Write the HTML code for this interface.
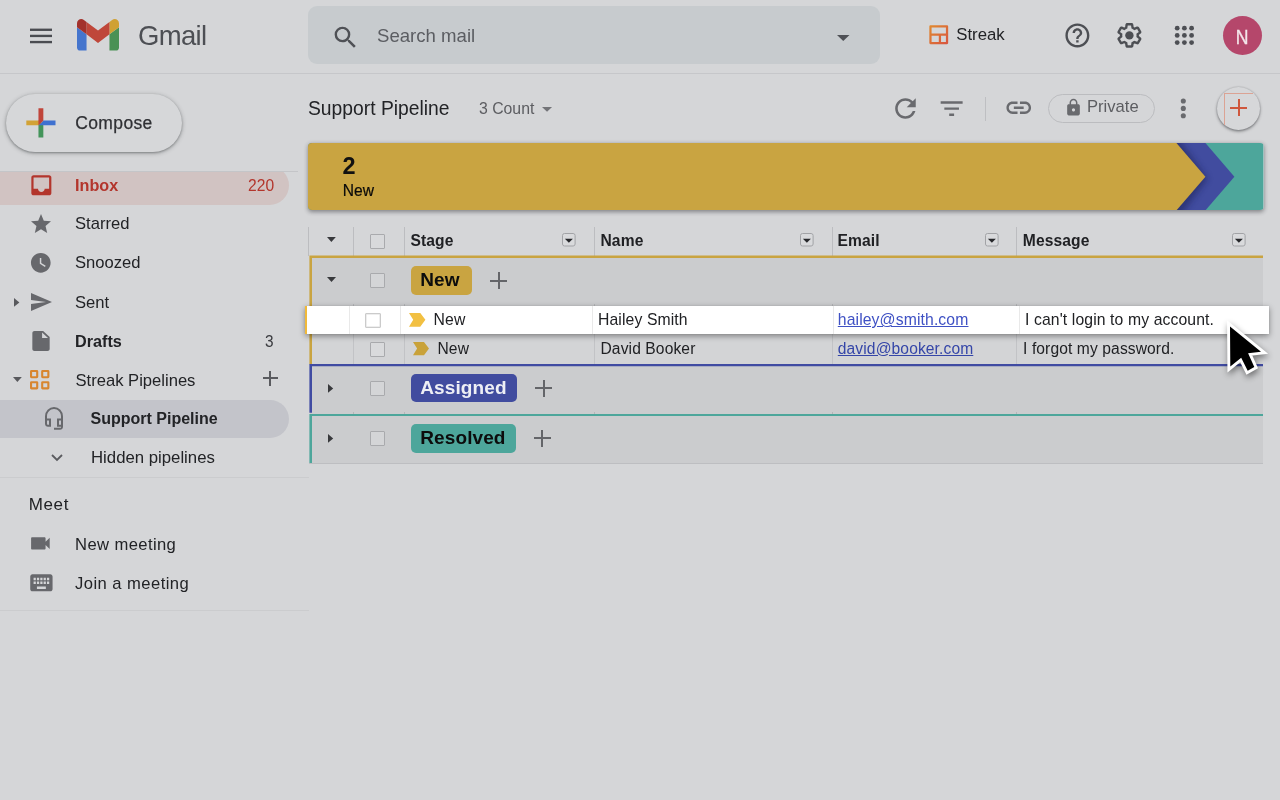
<!DOCTYPE html>
<html>
<head>
<meta charset="utf-8">
<title>Support Pipeline - Gmail</title>
<style>
*{box-sizing:border-box;margin:0;padding:0}
html,body{width:1280px;height:800px;overflow:hidden}
body{background:#d5d6d8;font-family:"Liberation Sans",sans-serif;color:#1f2023;position:relative}
.abs{position:absolute}
svg{position:absolute;display:block;overflow:visible}
.t{position:absolute;white-space:nowrap;line-height:1}
.nav{font-size:16.6px;color:#222326}
.b{font-weight:bold}
.hl{position:absolute;background:#bfc0c3;height:1px}
.cb{position:absolute;width:15px;height:15px;border:1px solid #a9aaad;background:#d8d9db;border-radius:1px}
.vl{position:absolute;width:1px;background:#bcbdc0}
.cell{font-size:15.6px;color:#202124;letter-spacing:.11px}
.badge{position:absolute;height:28.5px;border-radius:5px;font-weight:bold;font-size:19px;line-height:28px;padding-left:9.5px;letter-spacing:0.1px}
</style>
</head>
<body>
<div id="root" style="position:absolute;left:0;top:0;width:1280px;height:800px;will-change:transform">

<!-- ============ TOP BAR ============ -->
<div id="topbar">
  <!-- hamburger -->
  <svg style="left:30px;top:28px" width="22" height="16" viewBox="0 0 22 16"><g fill="#4a4c51"><rect x="0" y=".6" width="22" height="2.350"/><rect x="0" y="6.750" width="22" height="2.350"/><rect x="0" y="12.900" width="22" height="2.350"/></g></svg>
  <!-- gmail logo -->
  <svg style="left:77px;top:19.100px" width="42" height="31.700" viewBox="52 42 88 66">
    <path fill="#4575cd" d="M58 108h14V74L52 59v43c0 3.320 2.690 6 6 6"/>
    <path fill="#4a9155" d="M120 108h14c3.32 0 6-2.69 6-6V59l-20 15"/>
    <path fill="#d0a133" d="M120 48v26l20-15v-8c0-7.42-8.47-11.65-14.4-7.2"/>
    <path fill="#bf473a" d="M72 74V48l24 18 24-18v26L96 92"/>
    <path fill="#a3312b" d="M52 51v8l20 15V48l-5.600-4.200c-5.940-4.450-14.400-.220-14.400 7.200"/>
  </svg>
  <div class="t" id="gmailtxt" style="left:138px;top:22px;font-size:27.5px;color:#4d4f54;letter-spacing:-0.7px">Gmail</div>
  <!-- search -->
  <div class="abs" style="left:308px;top:6px;width:572px;height:58px;border-radius:9px;background:#c7cbce"></div>
  <svg style="left:331.400px;top:23.400px" width="29" height="29" viewBox="0 0 24 24"><path fill="#4f5156" d="M15.5 14h-.79l-.28-.27A6.471 6.471 0 0 0 16 9.500 6.500 6.500 0 1 0 9.500 16c1.610 0 3.090-.59 4.230-1.570l.27.28v.79l5 4.990L20.490 19l-4.990-5zm-6 0C7.010 14 5 11.990 5 9.500S7.010 5 9.500 5 14 7.010 14 9.500 11.990 14 9.500 14z"/></svg>
  <div class="t" id="searchtxt" style="left:377px;top:27px;font-size:18.6px;color:#5b5d62">Search mail</div>
  <svg style="left:837.00px;top:35.20px" width="12.50" height="6.10" viewBox="0 0 12.50 6.10"><path fill="#4f5156" d="M0 0h12.50l-6.25 6.10z"/></svg>
  <!-- streak -->
  <svg style="left:929px;top:25px" width="19.5" height="19.5" viewBox="0 0 20 20">
    <defs><linearGradient id="sg" x1="0" y1="0" x2="1" y2="1"><stop offset="0" stop-color="#e0872f"/><stop offset="1" stop-color="#d8573f"/></linearGradient></defs>
    <path fill="none" stroke="url(#sg)" stroke-width="2.3" stroke-linejoin="round" d="M1.5 1.500h17v17h-17zM1.500 9.800h17M11.200 9.800v8.700"/>
  </svg>
  <div class="t" id="streaktxt" style="left:956.200px;top:26.800px;font-size:16.800px;color:#222326">Streak</div>
  <!-- help -->
  <svg style="left:1062.600px;top:21.200px" width="28.8" height="28.8" viewBox="0 0 24 24"><path fill="#4d4f54" d="M11 18h2v-2h-2v2zm1-16C6.480 2 2 6.480 2 12s4.480 10 10 10 10-4.480 10-10S17.520 2 12 2zm0 18c-4.410 0-8-3.590-8-8s3.590-8 8-8 8 3.590 8 8-3.590 8-8 8zm0-14c-2.210 0-4 1.790-4 4h2c0-1.100.9-2 2-2s2 .9 2 2c0 2-3 1.750-3 5h2c0-2.250 3-2.500 3-5 0-2.210-1.790-4-4-4z"/></svg>
  <!-- gear -->
  <svg style="left:1115.450px;top:21.200px" width="28.8" height="28.8" viewBox="0 0 24 24"><path fill="#4d4f54" d="M13.850 22.250h-3.700c-.74 0-1.360-.54-1.450-1.270l-.27-1.890c-.27-.14-.53-.29-.79-.46l-1.800.72c-.7.26-1.470-.03-1.810-.65L2.200 15.530c-.35-.66-.2-1.440.36-1.880l1.530-1.190c-.01-.15-.02-.3-.02-.46 0-.15.010-.31.020-.46l-1.520-1.190c-.59-.45-.74-1.260-.37-1.880l1.850-3.190c.34-.62 1.110-.9 1.790-.63l1.810.73c.26-.17.52-.32.78-.46l.27-1.910c.09-.7.71-1.250 1.440-1.250h3.700c.74 0 1.360.54 1.450 1.270l.27 1.890c.27.14.53.29.79.46l1.800-.72c.71-.26 1.480.03 1.820.65l1.840 3.180c.36.66.2 1.440-.36 1.880l-1.520 1.190c.01.15.02.3.02.46s-.01.31-.02.46l1.520 1.190c.56.45.72 1.230.37 1.860l-1.860 3.220c-.34.62-1.110.9-1.800.63l-1.800-.72c-.26.17-.52.32-.78.46l-.27 1.910c-.1.68-.72 1.220-1.460 1.220zm-3.230-2h2.760l.37-2.550.53-.22c.44-.18.880-.44 1.340-.78l.45-.34 2.380.96 1.380-2.400-2.030-1.580.07-.56c.03-.26.060-.51.060-.78s-.03-.53-.06-.78l-.07-.56 2.030-1.580-1.390-2.400-2.390.96-.45-.35c-.42-.32-.87-.58-1.330-.77l-.52-.22-.37-2.550h-2.760l-.37 2.550-.53.21c-.44.19-.88.44-1.340.79l-.45.33-2.380-.95-1.390 2.390 2.030 1.580-.07.56a7 7 0 0 0-.06.79c0 .26.020.53.060.78l.07.56-2.030 1.580 1.380 2.400 2.390-.96.45.35c.43.33.86.58 1.330.77l.53.22.38 2.550z"/><circle cx="12" cy="12" r="3.500" fill="#4d4f54"/></svg>
  <!-- apps -->
  <svg style="left:1169.600px;top:21.350px" width="28.8" height="28.8" viewBox="0 0 24 24"><g fill="#4d4f54"><circle cx="6" cy="6" r="2"/><circle cx="12" cy="6" r="2"/><circle cx="18" cy="6" r="2"/><circle cx="6" cy="12" r="2"/><circle cx="12" cy="12" r="2"/><circle cx="18" cy="12" r="2"/><circle cx="6" cy="18" r="2"/><circle cx="12" cy="18" r="2"/><circle cx="18" cy="18" r="2"/></g></svg>
  <!-- avatar -->
  <div class="abs" style="left:1223px;top:16.100px;width:39px;height:39px;border-radius:50%;background:#b5476b"></div>
  <div class="t" id="avn" style="left:1235.100px;top:26.500px;font-size:20px;color:#f3e6ea;transform:scaleX(.88);-webkit-text-stroke:.35px #f3e6ea">N</div>
  <div class="hl" style="left:0;top:73px;width:1280px;background:#c6c7ca"></div>
</div>

<!-- ============ SIDEBAR ============ -->
<div id="sidebar">
  <!-- compose -->
  <div class="abs" style="left:6.400px;top:94px;width:175.600px;height:58px;border-radius:29px;background:#d6d7d9;box-shadow:0 1px 2.500px rgba(40,42,46,.42),0 1px 4px 1px rgba(40,42,46,.16)"></div>
  <svg style="left:18.900px;top:101.400px" width="43.800" height="43.800" viewBox="0 0 36 36"><path fill="#43945a" d="M16 16v14h4V20z"/><path fill="#3f71d0" d="M30 16H20l-4 4h14z"/><path fill="#d2a236" d="M6 16v4h10l4-4z"/><path fill="#c0453a" d="M20 16V6h-4v14z"/></svg>
  <div class="t" id="composetxt" style="left:75.300px;top:114.500px;font-size:17.500px;color:#2f3034;letter-spacing:0.35px;-webkit-text-stroke:.25px #2f3034">Compose</div>

  <!-- scroll shadow line -->
  <div class="hl" style="left:0;top:171px;width:298px;background:#c4c5c8"></div>
  <!-- inbox row -->
  <div class="abs" style="left:0;top:172px;width:295px;height:40px;overflow:hidden"><div class="abs" style="left:0;top:-6.400px;width:289px;height:39px;background:#d1c3c2;border-radius:0 19.500px 19.500px 0"></div></div>
  <svg style="left:27.750px;top:171.700px" width="26.700" height="26.700" viewBox="0 0 24 24"><path fill="#b3352c" d="M19 3H4.990c-1.110 0-1.980.9-1.980 2L3 19c0 1.100.88 2 1.990 2H19c1.100 0 2-.9 2-2V5c0-1.100-.9-2-2-2zm0 12h-4c0 1.660-1.350 3-3 3s-3-1.340-3-3H4.990V5H19v10z"/></svg>
  <div class="t nav b" id="n_inbox" style="left:75px;top:177px;color:#b3352c;font-size:16.200px">Inbox</div>
  <div class="t" id="n_220" style="left:248.400px;top:176.600px;color:#b3352c;font-size:16.200px;transform:scaleX(.965);transform-origin:0 0">220</div>

  <svg style="left:28.800px;top:211.500px" width="24" height="24" viewBox="0 0 24 24"><path fill="#67686c" d="M12 17.270L18.180 21l-1.640-7.030L22 9.240l-7.190-.61L12 2 9.190 8.630 2 9.240l5.460 4.730L5.820 21z"/></svg>
  <div class="t nav" id="n_starred" style="left:75px;top:216px">Starred</div>

  <svg style="left:28.950px;top:251.200px" width="23.600" height="23.600" viewBox="0 0 24 24"><path fill="#67686c" d="M12 2C6.500 2 2 6.500 2 12s4.500 10 10 10 10-4.500 10-10S17.500 2 12 2zm4.200 14.200L11 13V7h1.500v5.200l4.500 2.700-.8 1.300z"/></svg>
  <div class="t nav" id="n_snoozed" style="left:75px;top:255.200px">Snoozed</div>

  <svg style="left:14.20px;top:297.80px" width="5.40" height="8.80" viewBox="0 0 5.40 8.80"><path fill="#58595d" d="M0 0v8.80l5.40 -4.40z"/></svg>
  <svg style="left:28.700px;top:290px" width="24" height="24" viewBox="0 0 24 24"><path fill="#67686c" d="M2.010 21L23 12 2.010 3 2 10l15 2-15 2z"/></svg>
  <div class="t nav" id="n_sent" style="left:75px;top:295px">Sent</div>

  <svg style="left:27.500px;top:328.500px" width="26" height="24" viewBox="0 0 24 24" preserveAspectRatio="none"><path fill="#67686c" d="M6 2c-1.100 0-1.990.9-1.990 2L4 20c0 1.100.89 2 1.990 2H18c1.100 0 2-.9 2-2V8l-6-6H6zm7 7V3.500L18.500 9H13z"/></svg>
  <div class="t nav b" id="n_drafts" style="left:75px;top:333px;font-size:16.200px">Drafts</div>
  <div class="t" id="n_3" style="left:264.900px;top:332.600px;color:#3a3b3f;font-size:16.200px;transform:scaleX(.95);transform-origin:0 0">3</div>

  <!-- streak pipelines -->
  <svg style="left:13.00px;top:377.40px" width="8.80" height="4.90" viewBox="0 0 8.80 4.90"><path fill="#58595d" d="M0 0h8.80l-4.40 4.90z"/></svg>
  <svg style="left:29.800px;top:369.900px" width="20" height="20" viewBox="0 0 20 20"><g fill="none" stroke="#d8862f" stroke-width="2.100" stroke-linejoin="round"><rect x="1.050" y="1.050" width="6.150" height="6.150" rx=".4"/><rect x="12.200" y="1.050" width="6.150" height="6.150" rx=".4"/><rect x="1.050" y="12.200" width="6.150" height="6.150" rx=".4"/><rect x="12.200" y="12.200" width="6.150" height="6.150" rx=".4"/></g></svg>
  <div class="t nav" id="n_streak" style="left:75.500px;top:373px">Streak Pipelines</div>
  <div class="abs" style="left:263px;top:377.200px;width:14.500px;height:1.800px;background:#5a5b5f"></div>
  <div class="abs" style="left:269.300px;top:371px;width:1.800px;height:14.500px;background:#5a5b5f"></div>

  <!-- support pipeline -->
  <div class="abs" style="left:0;top:399.500px;width:289px;height:38px;background:#c3c4ca;border-radius:0 19px 19px 0"></div>
  <svg style="left:42px;top:405.900px" width="24" height="24.900" viewBox="0 0 24 24" preserveAspectRatio="none"><path fill="#67686c" d="M12 1a9 9 0 0 0-9 9v7c0 1.660 1.340 3 3 3h3v-8H5v-2c0-3.870 3.130-7 7-7s7 3.130 7 7v2h-4v8h4v1h-7v2h6c1.660 0 3-1.340 3-3V10a9 9 0 0 0-9-9zM7 14v4H6c-.55 0-1-.45-1-1v-3h2zm12 4h-2v-4h2v4z"/></svg>
  <div class="t nav b" id="n_support" style="left:90.500px;top:410.500px;font-size:16px">Support Pipeline</div>

  <!-- hidden pipelines -->
  <svg style="left:50.500px;top:454px" width="12" height="8" viewBox="0 0 12 8"><path fill="none" stroke="#5a5b5f" stroke-width="1.800" d="M1 1l5 5 5-5"/></svg>
  <div class="t nav" id="n_hidden" style="left:91px;top:450.200px;font-size:16.750px">Hidden pipelines</div>

  <div class="hl" style="left:0;top:476.600px;width:309px;background:#cbccce"></div>
  <div class="t" id="n_meet" style="left:28.800px;top:496px;font-size:17px;color:#222326;letter-spacing:0.6px">Meet</div>

  <svg style="left:28.450px;top:530.950px" width="24.800" height="24.800" viewBox="0 0 24 24"><path fill="#67686c" d="M17 10.500V7c0-.55-.45-1-1-1H4c-.55 0-1 .45-1 1v10c0 .55.45 1 1 1h12c.55 0 1-.45 1-1v-3.500l4 4v-11l-4 4z"/></svg>
  <div class="t nav" id="n_newmeet" style="left:75px;top:536.500px;letter-spacing:0.4px">New meeting</div>

  <svg style="left:27.550px;top:567.650px" width="26.800" height="29.500" viewBox="0 0 24 24" preserveAspectRatio="none"><path fill="#67686c" d="M20 5H4c-1.100 0-1.990.9-1.990 2L2 17c0 1.100.9 2 2 2h16c1.100 0 2-.9 2-2V7c0-1.100-.9-2-2-2zm-9 3h2v2h-2V8zm0 3h2v2h-2v-2zM8 8h2v2H8V8zm0 3h2v2H8v-2zm-1 2H5v-2h2v2zm0-3H5V8h2v2zm9 7H8v-2h8v2zm0-4h-2v-2h2v2zm0-3h-2V8h2v2zm3 3h-2v-2h2v2zm0-3h-2V8h2v2z"/></svg>
  <div class="t nav" id="n_join" style="left:75px;top:575.700px;letter-spacing:0.45px">Join a meeting</div>

  <div class="hl" style="left:0;top:610px;width:309px;background:#cbccce"></div>
</div>


<!-- ============ MAIN ============ -->
<div id="main">
  <div class="t" id="m_title" style="left:308px;top:99px;font-size:19.300px;color:#222326">Support Pipeline</div>
  <div class="t" id="m_count" style="left:479px;top:101px;font-size:15.800px;color:#5c5d61">3 Count</div>
  <svg style="left:541.90px;top:107.30px" width="10.10" height="4.80" viewBox="0 0 10.10 4.80"><path fill="#737478" d="M0 0h10.10l-5.05 4.80z"/></svg>

  <!-- toolbar icons -->
  <svg style="left:890.150px;top:92.750px" width="30.900" height="30.900" viewBox="0 0 24 24"><path fill="#696a6e" d="M17.650 6.350C16.200 4.900 14.210 4 12 4c-4.420 0-7.990 3.580-7.990 8s3.570 8 7.990 8c3.730 0 6.840-2.550 7.730-6h-2.080c-.82 2.330-3.040 4-5.650 4-3.310 0-6-2.690-6-6s2.690-6 6-6c1.660 0 3.140.69 4.220 1.780L13 11h7V4l-2.350 2.350z"/></svg>
  <svg style="left:937.250px;top:93.700px" width="29.300" height="29.300" viewBox="0 0 24 24"><path fill="#696a6e" d="M10 18h4v-2h-4v2zM3 6v2h18V6H3zm3 7h12v-2H6v2z"/></svg>
  <div class="vl" style="left:985px;top:96.500px;height:24px;background:#bebfc2"></div>
  <svg style="left:1003.850px;top:92.850px" width="29.500" height="29.500" viewBox="0 0 24 24"><path fill="#696a6e" d="M3.900 12c0-1.710 1.390-3.100 3.100-3.100h4V7H7c-2.760 0-5 2.240-5 5s2.240 5 5 5h4v-1.900H7c-1.710 0-3.100-1.390-3.100-3.100zM8 13h8v-2H8v2zm9-6h-4v1.900h4c1.710 0 3.100 1.390 3.100 3.100s-1.390 3.100-3.100 3.100h-4V17h4c2.760 0 5-2.240 5-5s-2.240-5-5-5z"/></svg>
  <div class="abs" style="left:1048px;top:94px;width:106.500px;height:28.500px;border:1px solid #bbbcbf;border-radius:14.500px"></div>
  <svg style="left:1063.800px;top:98.100px" width="19" height="19" viewBox="0 0 24 24"><path fill="#696a6e" d="M18 8h-1V6c0-2.760-2.240-5-5-5S7 3.240 7 6v2H6c-1.100 0-2 .9-2 2v10c0 1.100.9 2 2 2h12c1.100 0 2-.9 2-2V10c0-1.100-.9-2-2-2zm-6 9c-1.100 0-2-.9-2-2s.9-2 2-2 2 .9 2 2-.9 2-2 2zm3.100-9H8.900V6c0-1.710 1.390-3.100 3.100-3.100 1.710 0 3.100 1.390 3.100 3.100v2z"/></svg>
  <div class="t" id="m_private" style="left:1087px;top:98.500px;font-size:16.600px;color:#5c5d61">Private</div>
  <svg style="left:1180.200px;top:97.900px" width="7" height="21" viewBox="0 0 7 21"><g fill="#696a6e"><circle cx="3.300" cy="3" r="2.550"/><circle cx="3.300" cy="10.400" r="2.550"/><circle cx="3.300" cy="17.800" r="2.550"/></g></svg>
  <!-- FAB -->
  <div class="abs" style="left:1217px;top:86.500px;width:43px;height:43px;border-radius:50%;background:#d6d7d9;box-shadow:0 1.500px 3px rgba(40,42,46,.5),0 0 2px rgba(40,42,46,.22)"></div>
  <div class="abs" style="left:1224px;top:93px;width:29px;height:32px;border-left:1px solid #dba394;border-top:1px solid #dba394"></div>
  <div class="abs" style="left:1230px;top:106.500px;width:17px;height:2px;background:#cf573d"></div>
  <div class="abs" style="left:1237.500px;top:99px;width:2px;height:17px;background:#cf573d"></div>

  <!-- banner -->
  <div class="abs" style="left:308.400px;top:142.700px;width:955.400px;height:67.400px;border-radius:4px;overflow:hidden;box-shadow:0 1.500px 4px rgba(30,32,36,.45)">
    <svg style="left:0;top:0" width="955.400" height="67.400" viewBox="0 0 956 67.500" preserveAspectRatio="none">
      <defs><filter id="sh" x="-20%" y="-20%" width="140%" height="140%"><feGaussianBlur stdDeviation="3"/></filter></defs>
      <rect x="0" y="0" width="956" height="67.500" fill="#4da69b"/>
      <path d="M800 0H898L927 33.750 898 67.500H800z" fill="#414c9f"/>
      <path d="M0 -6H869L898 33.750 869 73H0z" fill="#1d2356" opacity=".55" filter="url(#sh)" transform="translate(2,2)"/>
      <path d="M0 0H869L898 33.750 869 67.500H0z" fill="#c9a441"/>
    </svg>
  </div>
  <div class="t b" id="m_two" style="left:342.500px;top:154.700px;font-size:23.500px;color:#111">2</div>
  <div class="t" id="m_new" style="left:342.800px;top:183.200px;font-size:15.600px;color:#0a0a0a;-webkit-text-stroke:.2px #0a0a0a">New</div>

  <!-- ============ TABLE ============ -->
  <div id="table">
    <!-- header row -->
    <div class="vl" style="left:308.300px;top:227px;height:29px"></div>
    <div class="vl" style="left:353.200px;top:227px;height:29px"></div>
    <div class="vl" style="left:403.900px;top:227px;height:29px"></div>
    <div class="vl" style="left:594.400px;top:227px;height:29px"></div>
    <div class="vl" style="left:832.100px;top:227px;height:29px"></div>
    <div class="vl" style="left:1016.400px;top:227px;height:29px"></div>
    <svg style="left:326.90px;top:237.30px" width="8.80" height="5.00" viewBox="0 0 8.80 5.00"><path fill="#38393c" d="M0 0h8.80l-4.40 5.00z"/></svg>
    <div class="cb" style="left:370px;top:234px"></div>
    <div class="t b cell" id="h_stage" style="left:410.500px;top:233.400px">Stage</div>
    <svg style="left:561.80px;top:232.80px" width="14" height="14" viewBox="0 0 14 14"><rect x=".5" y=".5" width="12.600" height="12.500" rx="2" fill="#d9dadc" stroke="#a2a3a6"/><path fill="#26272a" d="M2.900 5.700h8l-4 4z"/></svg>
    <div class="t b cell" id="h_name" style="left:600.500px;top:233.400px">Name</div>
    <svg style="left:799.60px;top:232.80px" width="14" height="14" viewBox="0 0 14 14"><rect x=".5" y=".5" width="12.600" height="12.500" rx="2" fill="#d9dadc" stroke="#a2a3a6"/><path fill="#26272a" d="M2.900 5.700h8l-4 4z"/></svg>
    <div class="t b cell" id="h_email" style="left:837.600px;top:233.400px">Email</div>
    <svg style="left:985.00px;top:232.80px" width="14" height="14" viewBox="0 0 14 14"><rect x=".5" y=".5" width="12.600" height="12.500" rx="2" fill="#d9dadc" stroke="#a2a3a6"/><path fill="#26272a" d="M2.900 5.700h8l-4 4z"/></svg>
    <div class="t b cell" id="h_msg" style="left:1022.800px;top:233.400px">Message</div>
    <svg style="left:1231.50px;top:232.80px" width="14" height="14" viewBox="0 0 14 14"><rect x=".5" y=".5" width="12.600" height="12.500" rx="2" fill="#d9dadc" stroke="#a2a3a6"/><path fill="#26272a" d="M2.900 5.700h8l-4 4z"/></svg>

    <!-- group New -->
    <div class="abs" style="left:310px;top:256px;width:953px;height:108px;background:#cbccce"></div>
    <div class="abs" style="left:311.700px;top:334px;width:951.300px;height:30px;background:#d3d4d6"></div>
    <svg style="left:326.90px;top:276.90px" width="9.00" height="5.00" viewBox="0 0 9.00 5.00"><path fill="#38393c" d="M0 0h9.00l-4.50 5.00z"/></svg>
    <div class="cb" style="left:370px;top:272.500px;background:#d4d5d7"></div>
    <div class="badge" id="b_new" style="left:410.800px;top:266px;width:61px;background:#c9a441;color:#0c0c0c">New</div>
    <div class="abs" style="left:490px;top:279.700px;width:17px;height:2.200px;background:#646569"></div>
    <div class="abs" style="left:497.500px;top:272.200px;width:2.200px;height:17px;background:#646569"></div>

    <!-- row 2 -->
    <div class="vl" style="left:353.200px;top:334px;height:30px;background:#c2c3c6"></div>
    <div class="vl" style="left:403.900px;top:334px;height:30px;background:#c2c3c6"></div>
    <div class="vl" style="left:594.400px;top:334px;height:30px;background:#c2c3c6"></div>
    <div class="vl" style="left:832.100px;top:334px;height:30px;background:#c2c3c6"></div>
    <div class="vl" style="left:1016.400px;top:334px;height:30px;background:#c2c3c6"></div>
    <div class="cb" style="left:370px;top:342.200px;background:#d9dadc"></div>
    <svg style="left:413.300px;top:341.800px" width="16" height="13.200" viewBox="0 0 16 13.200"><path fill="#c9a23a" d="M0 0H11L16 6.600 11 13.200H0L4.100 6.600z"/></svg>
    <div class="t cell" id="r2_new" style="left:437.500px;top:340.800px">New</div>
    <div class="t cell" id="r2_name" style="left:600.500px;top:340.800px">David Booker</div>
    <div class="t cell" id="r2_email" style="left:837.800px;top:340.800px;color:#3546a8;text-decoration:underline">david@booker.com</div>
    <div class="t cell" id="r2_msg" style="left:1023px;top:340.800px">I forgot my password.</div>

    <!-- group Assigned -->
    <div class="abs" style="left:310px;top:364px;width:953px;height:50px;background:#cbccce"></div>
    <svg style="left:327.80px;top:384.10px" width="5.20" height="8.80" viewBox="0 0 5.20 8.80"><path fill="#38393c" d="M0 0v8.80l5.20 -4.40z"/></svg>
    <div class="cb" style="left:370px;top:380.800px;background:#d4d5d7"></div>
    <div class="badge" id="b_assigned" style="left:410.800px;top:374px;width:106.400px;height:28.200px;background:#414c9f;color:#eeeff5">Assigned</div>
    <div class="abs" style="left:535.100px;top:387.300px;width:17px;height:2.200px;background:#646569"></div>
    <div class="abs" style="left:542.500px;top:379.800px;width:2.200px;height:17px;background:#646569"></div>

    <!-- group Resolved -->
    <div class="abs" style="left:310px;top:414px;width:953px;height:49px;background:#cbccce"></div><div class="hl" style="left:309px;top:463px;width:954px;background:#bdbec1"></div>
    <svg style="left:327.80px;top:434.00px" width="5.20" height="8.80" viewBox="0 0 5.20 8.80"><path fill="#38393c" d="M0 0v8.80l5.20 -4.40z"/></svg>
    <div class="cb" style="left:370px;top:430.800px;background:#d4d5d7"></div>
    <div class="badge" id="b_resolved" style="left:410.800px;top:424px;width:105px;background:#4da69b;color:#0c0c0c">Resolved</div>
    <div class="abs" style="left:533.700px;top:437.200px;width:17px;height:2.200px;background:#646569"></div>
    <div class="abs" style="left:541.200px;top:429.700px;width:2.200px;height:17px;background:#646569"></div>

    <div class="vl" style="left:353.200px;top:304px;height:2px;background:#b4b5b8"></div>
    <div class="vl" style="left:353.200px;top:411.900px;height:2px;background:#b4b5b8"></div>
    <div class="vl" style="left:403.900px;top:304px;height:2px;background:#b4b5b8"></div>
    <div class="vl" style="left:403.900px;top:411.900px;height:2px;background:#b4b5b8"></div>
    <div class="vl" style="left:594.400px;top:304px;height:2px;background:#b4b5b8"></div>
    <div class="vl" style="left:594.400px;top:411.900px;height:2px;background:#b4b5b8"></div>
    <div class="vl" style="left:832.100px;top:304px;height:2px;background:#b4b5b8"></div>
    <div class="vl" style="left:832.100px;top:411.900px;height:2px;background:#b4b5b8"></div>
    <div class="vl" style="left:1016.400px;top:304px;height:2px;background:#b4b5b8"></div>
    <div class="vl" style="left:1016.400px;top:411.900px;height:2px;background:#b4b5b8"></div>
    <svg style="left:309px;top:255px" width="955" height="209" viewBox="309 255 955 209">
      <path fill="#c9a441" d="M309.400 255.600H1263V258.100H312V364.200H309.400z"/>
      <path fill="#404ba2" d="M309.400 364.100H1263V366.300H312V412.800H309.400z"/>
      <path fill="#4da69b" d="M309.400 413.900H1263V416H312V462.900H309.400z"/>
    </svg>
    <!-- highlighted row 1 -->
    <div class="abs" id="hlrow" style="left:304.500px;top:306px;width:964px;height:28px;background:#fff;box-shadow:0 2px 6px rgba(0,0,0,.4),0 0 2px rgba(0,0,0,.08)">
      <div class="abs" style="left:0;top:0;width:2.800px;height:28px;background:#f0b93a"></div>
    </div>
    <div class="vl" style="left:348.600px;top:306px;height:28px;background:#e9e9e9"></div>
    <div class="vl" style="left:399.900px;top:306px;height:28px;background:#e9e9e9"></div>
    <div class="vl" style="left:592.400px;top:306px;height:28px;background:#e9e9e9"></div>
    <div class="vl" style="left:832.800px;top:306px;height:28px;background:#e9e9e9"></div>
    <div class="vl" style="left:1018.500px;top:306px;height:28px;background:#e9e9e9"></div>
    <div class="cb" style="left:365px;top:312.600px;width:15.600px;height:15.600px;background:#fff;border-color:#cbcbcb;box-shadow:inset 0 0 0 .5px #dedede"></div>
    <svg style="left:408.600px;top:312.600px" width="16.400" height="13.700" viewBox="0 0 16 13.200" preserveAspectRatio="none"><path fill="#f2c042" d="M0 0H11L16 6.600 11 13.200H0L4.100 6.600z"/></svg>
    <div class="t cell" id="r1_new" style="left:433.600px;top:312.400px;font-size:15.750px">New</div>
    <div class="t cell" id="r1_name" style="left:598px;top:312.400px;font-size:15.750px">Hailey Smith</div>
    <div class="t cell" id="r1_email" style="left:837.800px;top:312.400px;font-size:15.750px;color:#3f51c4;text-decoration:underline">hailey@smith.com</div>
    <div class="t cell" id="r1_msg" style="left:1025px;top:312.400px;font-size:15.750px">I can't login to my account.</div>

    <!-- cursor -->
    <svg style="left:1215px;top:310px;filter:drop-shadow(1px 3px 3px rgba(0,0,0,.45))" width="65" height="80" viewBox="1215 310 65 80">
      <path d="M1230 326.400L1230.300 366.500 1241.200 357.700 1247.700 370.700 1254.300 367.100 1248.100 353.200 1261 351.700z" fill="#000" stroke="#fff" stroke-width="5.800" stroke-linejoin="miter" stroke-miterlimit="10" paint-order="stroke"/>
    </svg>
  </div>

</div>


</div>
</body>
</html>
